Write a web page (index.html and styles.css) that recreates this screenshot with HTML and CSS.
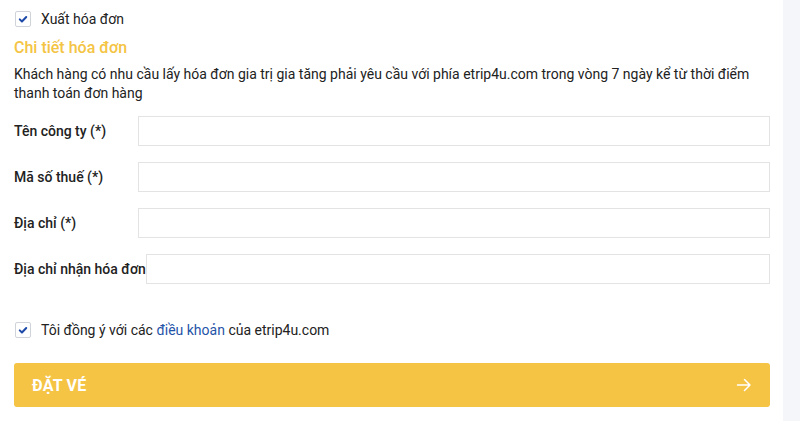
FILE: index.html
```html
<!DOCTYPE html>
<html lang="vi">
<head>
<meta charset="utf-8">
<link rel="stylesheet" href="styles.css">
</head>
<body>
<div class="page">
  <div class="panel">
    <label class="check-row first">
      <span class="box"><svg viewBox="0 0 16 16" width="16" height="16"><path d="M4.3 8.4l2.5 2.5 4.9-5.2" fill="none" stroke="#1d4aa8" stroke-width="2.3" stroke-linecap="round" stroke-linejoin="round"/></svg></span>
      <span class="check-text">Xuất hóa đơn</span>
    </label>
    <h3 class="title">Chi tiết hóa đơn</h3>
    <p class="note">Khách hàng có nhu cầu lấy hóa đơn gia trị gia tăng phải yêu cầu với phía etrip4u.com trong vòng 7 ngày kể từ thời điểm thanh toán đơn hàng</p>
    <div class="field">
      <span class="label">Tên công ty (*)</span>
      <span class="input"></span>
    </div>
    <div class="field">
      <span class="label">Mã số thuế (*)</span>
      <span class="input"></span>
    </div>
    <div class="field">
      <span class="label">Địa chỉ (*)</span>
      <span class="input"></span>
    </div>
    <div class="field auto">
      <span class="label">Địa chỉ nhận hóa đơn</span>
      <span class="input"></span>
    </div>
    <label class="check-row agree">
      <span class="box"><svg viewBox="0 0 16 16" width="16" height="16"><path d="M4.3 8.4l2.5 2.5 4.9-5.2" fill="none" stroke="#1d4aa8" stroke-width="2.3" stroke-linecap="round" stroke-linejoin="round"/></svg></span>
      <span class="check-text">Tôi đồng ý với các <a class="link">điều khoản</a> của etrip4u.com</span>
    </label>
    <div class="btn">
      <span class="btn-text">ĐẶT VÉ</span>
      <svg class="arrow" viewBox="0 0 16 16" width="16" height="16"><path d="M1.5 8h12.5M8.5 2.5L14 8l-5.5 5.5" fill="none" stroke="#fff" stroke-width="1.5" stroke-linecap="round" stroke-linejoin="round"/></svg>
    </div>
  </div>
</div>
</body>
</html>
```

FILE: styles.css
```css
* { box-sizing: border-box; }
html, body { margin: 0; padding: 0; }
body {
  background: #f5f6fa;
  font-family: Roboto, "Liberation Sans", Arial, sans-serif;
  color: #222;
  width: 800px;
  height: 421px;
  overflow: hidden;
}
.page { display: flex; height: 421px; }
.panel {
  width: 783px;
  background: #fff;
  padding: 11px 13px 0 14px;
}
.check-row {
  display: flex;
  align-items: center;
  height: 16px;
}
.box {
  width: 16px;
  height: 16px;
  border: 1px solid #cfd3da;
  border-radius: 2px;
  background: #fff;
  display: flex;
  align-items: center;
  justify-content: center;
  margin-left: 1px;
}
.box svg { display: block; width: 14px; height: 14px; }
.check-text { margin-left: 10px; font-size: 14px; }
.title {
  margin: 11px 0 0 0;
  font-size: 16px;
  font-weight: 500;
  color: #f4c444;
  line-height: 20px;
}
.note {
  margin: 7px 0 0 0;
  font-size: 14px;
  line-height: 19px;
}
.field {
  display: flex;
  align-items: center;
  height: 30px;
  margin-top: 16px;
}
.note + .field { margin-top: 13px; }
.label {
  width: 124px;
  flex: none;
  font-size: 14px;
  font-weight: 500;
}
.field.auto .label { width: auto; }
.input {
  flex: 1;
  height: 30px;
  border: 1px solid #e3e3e3;
  background: #fff;
}
.agree { margin-top: 38px; }
.link { color: #1f54a8; text-decoration: none; }
.btn {
  margin-top: 25px;
  height: 44px;
  background: #f5c445;
  border-radius: 3px;
  display: flex;
  align-items: center;
  justify-content: space-between;
  padding: 0 18px 0 18px;
}
.btn-text {
  color: #fff;
  font-weight: 700;
  font-size: 16px;
  letter-spacing: 0.2px;
}
.arrow { display: block; }
```
